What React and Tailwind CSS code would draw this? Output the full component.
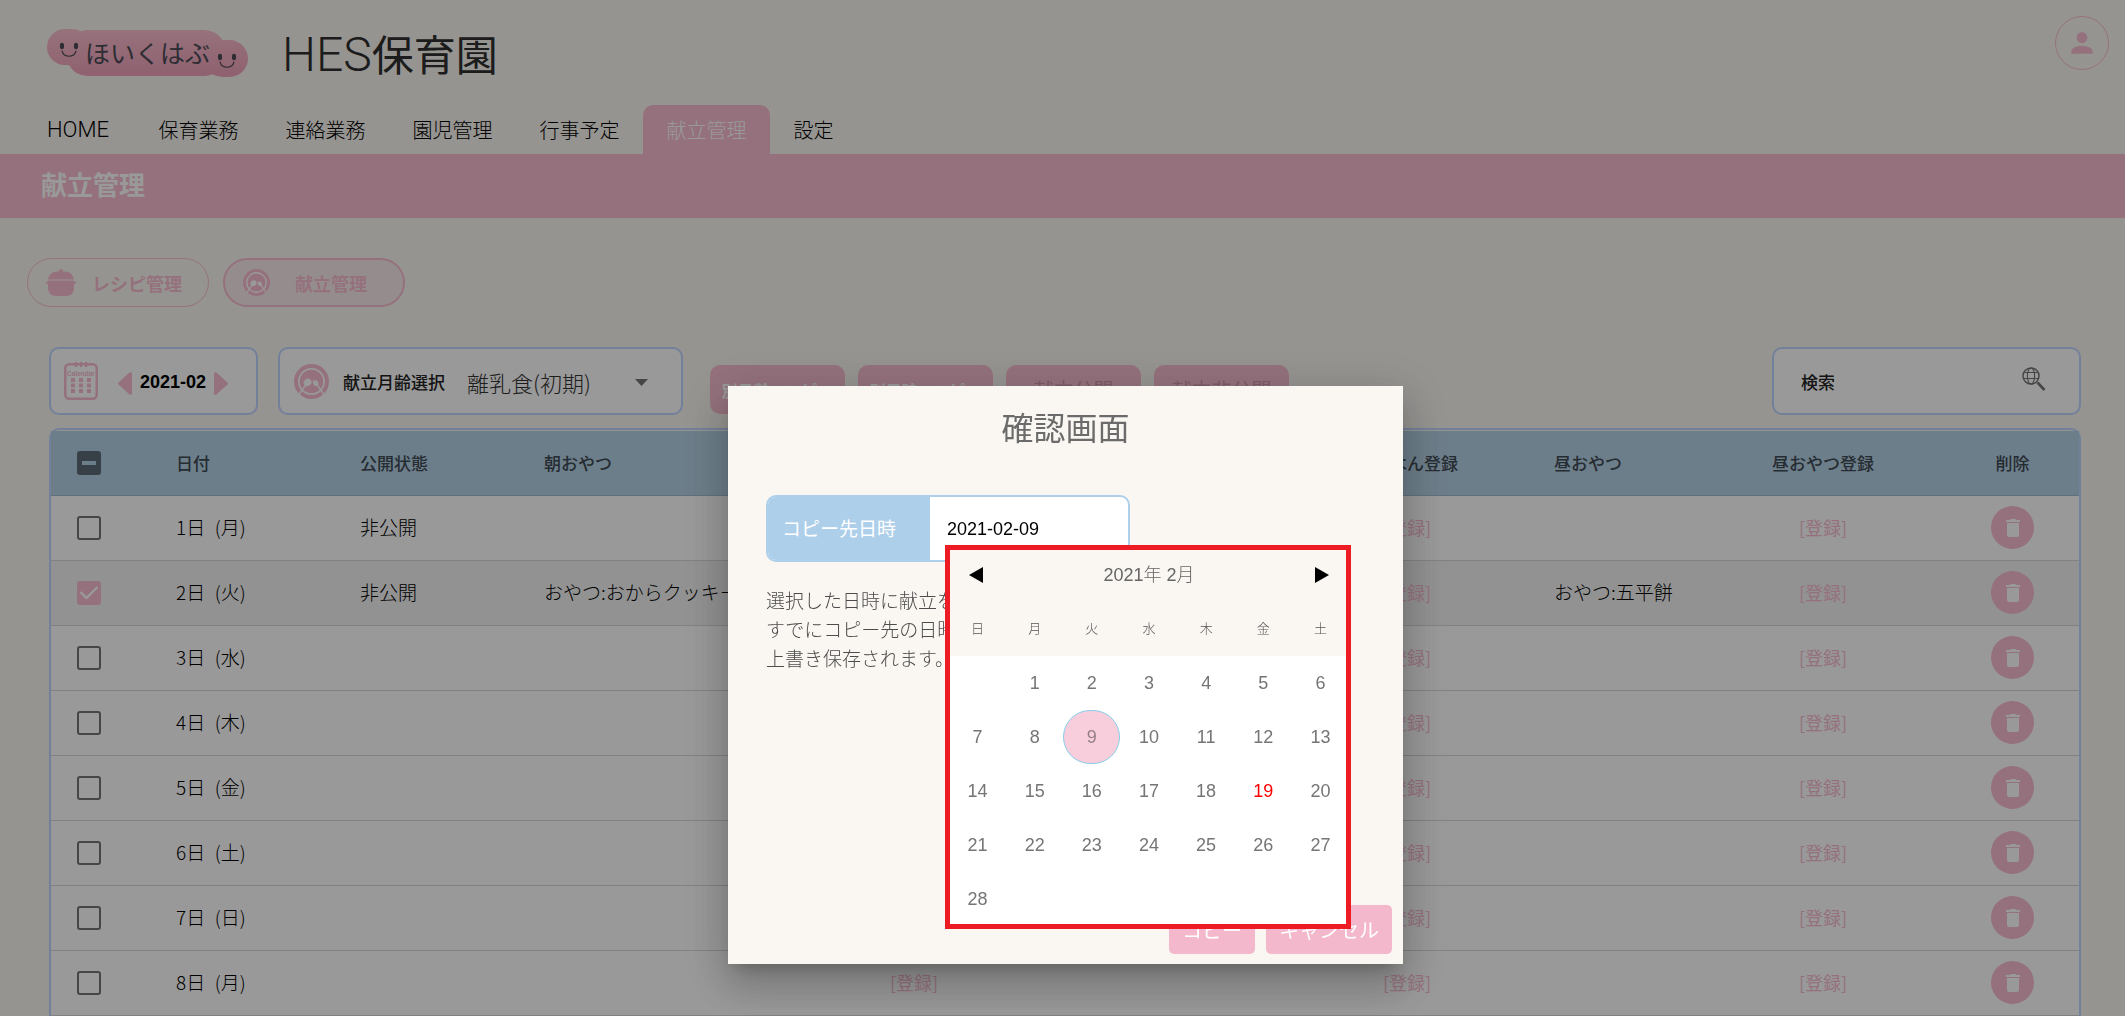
import React from "react";

const JP = "font-['Noto_Sans_CJK_JP',sans-serif]";
const ARIAL = "font-['Liberation_Sans','Noto_Sans_CJK_JP',sans-serif]";

const NAV = [
  { label: "HOME", width: "w-[114px]", size: "text-[22px] font-['Roboto',sans-serif]" },
  { label: "保育業務", width: "w-[127px]", size: "text-xl" },
  { label: "連絡業務", width: "w-[127px]", size: "text-xl" },
  { label: "園児管理", width: "w-[127px]", size: "text-xl" },
  { label: "行事予定", width: "w-[127px]", size: "text-xl" },
  { label: "献立管理", width: "w-[127px]", size: "text-xl", active: true },
  { label: "設定", width: "w-[87px]", size: "text-xl" },
];

const ROWS = [
  { day: "1日", weekday: "月", status: "非公開" },
  { day: "2日", weekday: "火", status: "非公開", checked: true, morning: "おやつ:おからクッキー", snack: "おやつ:五平餅" },
  { day: "3日", weekday: "水" },
  { day: "4日", weekday: "木" },
  { day: "5日", weekday: "金" },
  { day: "6日", weekday: "土" },
  { day: "7日", weekday: "日" },
  { day: "8日", weekday: "月" },
];

const WEEKDAYS = ["日", "月", "火", "水", "木", "金", "土"];
const DAYS = [null, ...Array.from({ length: 28 }, (_, i) => i + 1)];

function Logo() {
  return (
    <div className="relative h-[52px] w-[201px]">
      <svg viewBox="0 0 201 52" className="h-full w-full" aria-hidden="true">
        <defs>
          <linearGradient id="cloud" x1="0" y1="0" x2="0" y2="1">
            <stop offset="0" stopColor="#fbc0d0" />
            <stop offset="1" stopColor="#ef9fb8" />
          </linearGradient>
          <clipPath id="cloudShape">
            <rect x="0" y="1" width="43" height="36" rx="18" />
            <rect x="19" y="2" width="160" height="46" rx="22" />
            <rect x="157" y="12" width="44" height="37" rx="18.500" />
          </clipPath>
        </defs>
        <rect width="201" height="52" fill="url(#cloud)" clipPath="url(#cloudShape)" />
        <g fill="#4b4b55">
          <ellipse cx="15" cy="18" rx="2.100" ry="3.200" />
          <ellipse cx="29" cy="18" rx="2.100" ry="3.200" />
          <ellipse cx="173" cy="29" rx="2.100" ry="3.200" />
          <ellipse cx="187" cy="29" rx="2.100" ry="3.200" />
        </g>
        <g fill="none" stroke="#4b4b55" strokeWidth="1.100" strokeLinecap="round">
          <path d="M15 23c2 7 12 7 14 0" />
          <path d="M173 34c2 7 12 7 14 0" />
        </g>
      </svg>
      <span className="absolute inset-0 flex items-center justify-center pb-0.5 text-[25px] text-[#4b4b55]">ほいくはぶ</span>
    </div>
  );
}

function PlateIcon({ className }) {
  return (
    <svg viewBox="0 0 36 36" className={className} aria-hidden="true">
      <circle cx="18" cy="18" r="18" fill="#f7bdd0" />
      <circle cx="18" cy="18" r="13" fill="none" stroke="#fff" strokeWidth="1.800" />
      <g stroke="#fff" strokeWidth="1.600" strokeLinecap="round">
        <path d="M12.500 21 5.500 31" />
        <path d="M23.500 21l7 10" />
      </g>
      <ellipse cx="14" cy="19" rx="4.200" ry="3.600" fill="#fff" transform="rotate(-35 14 19)" />
      <path d="M19 16.500l1 4.500c1.500 2.500 5 2 5.500-1l-2.700-4-.8 2-1-2.300-.7 2z" fill="#fff" />
    </svg>
  );
}

function PotIcon() {
  return (
    <svg viewBox="0 0 30 27" className="h-[27px] w-[30px]" aria-hidden="true" fill="#f7bdd0">
      <circle cx="15" cy="2" r="2" />
      <path d="M2 10.500C3 5.500 6 2.500 11 2.500h8c5 0 8 3 9 8z" />
      <path d="M2 11.500h26V19c0 5-3 8-8 8H10c-5 0-8-3-8-8z" />
      <rect x="0" y="12.500" width="30" height="2.600" rx="1.300" />
    </svg>
  );
}

function CalendarIcon() {
  return (
    <svg viewBox="0 0 34 38" className="h-[38px] w-[34px]" aria-hidden="true">
      <rect x="1.250" y="2.250" width="31.500" height="34.500" rx="4" fill="none" stroke="#f7bdd0" strokeWidth="2.500" />
      <g fill="#f7bdd0">
        <rect x="11" y="0" width="2.200" height="5" />
        <rect x="16" y="0" width="2.200" height="5" />
        <rect x="21" y="0" width="2.200" height="5" />
        {[7, 15, 23].map((x) =>
          [16, 21.5, 27].map((y) => <rect key={x + "-" + y} x={x} y={y} width="4" height="4" />)
        )}
      </g>
      <text x="17" y="13.500" textAnchor="middle" fontSize="6.500" fontFamily="Liberation Sans" fontWeight="bold" fill="#f7bdd0">
        Calendar
      </text>
    </svg>
  );
}

function Arrow({ left }) {
  return (
    <svg viewBox="0 0 14 23" className="h-[23px] w-[14px]" aria-hidden="true" fill="#f7bdd0">
      {left ? (
        <path d="M14 2v19c0 2-1.500 2.500-3 1L.6 12.600a1.500 1.500 0 0 1 0-2.200L11 1c1.500-1.500 3-1 3 1z" />
      ) : (
        <path d="M0 2v19c0 2 1.500 2.500 3 1l10.400-9.400a1.500 1.500 0 0 0 0-2.200L3 1C1.500-.5 0 0 0 2z" />
      )}
    </svg>
  );
}

function SearchGlobeIcon() {
  return (
    <svg viewBox="0 0 24 24" className="h-6 w-6" fill="none" stroke="#757575" strokeWidth="1.100" aria-hidden="true">
      <circle cx="9" cy="9" r="8" strokeWidth="1.500" />
      <ellipse cx="9" cy="9" rx="3.600" ry="8" />
      <path d="M2.500 5.500h13M1.500 11.500h15" />
      <path d="M15.500 15.500l7 7.500" strokeWidth="2.600" />
    </svg>
  );
}

function Check({ state, label }) {
  return (
    <label className="relative mx-auto flex h-6 w-6">
      <input
        type="checkbox"
        aria-label={label}
        defaultChecked={state === "checked"}
        className={
          "h-6 w-6 appearance-none rounded-[3px] " +
          (state === "checked" ? "bg-[#f7bdd0]" : state === "mixed" ? "bg-[#5c6b76]" : "border-[2px] border-[#757575]")
        }
      />
      {state === "checked" && (
        <svg viewBox="0 0 24 24" className="pointer-events-none absolute inset-0" fill="none" stroke="#fff" strokeWidth="2.400">
          <path d="M3.500 11l6 6L20.500 6" />
        </svg>
      )}
      {state === "mixed" && <span className="absolute left-[5px] top-2.5 h-1 w-3.5 bg-[#b5d2e6]" />}
    </label>
  );
}

function RegisterLink() {
  return (
    <a href="#register" className="text-lg font-normal text-[#f7bdd0]">
      [登録]
    </a>
  );
}

function Header() {
  return (
    <header>
      <div className="flex h-[105px] items-start justify-between pl-[47px] pr-4">
        <div className="flex items-center gap-[34px] pt-[23px]">
          <Logo />
          <h1 className="flex items-baseline text-[42px] leading-[60px] text-[#2f2f2f]">
            <span className="font-['Roboto',sans-serif] text-5xl font-light leading-[60px]">HES</span>
            保育園
          </h1>
        </div>
        <button type="button" aria-label="アカウント" className="mt-4 flex h-[54px] w-[54px] items-center justify-center rounded-full border border-[#f7bdd0]">
          <svg viewBox="0 0 24 24" className="h-8 w-8" fill="#f7bdd0">
            <path d="M12 12c2.210 0 4-1.790 4-4s-1.790-4-4-4-4 1.790-4 4 1.790 4 4 4zm0 2c-2.670 0-8 1.340-8 4v2h16v-2c0-2.660-5.330-4-8-4z" />
          </svg>
        </button>
      </div>
      <nav className="flex h-[49px] pl-[21px]">
        {NAV.map((n) => (
          <a
            key={n.label}
            href="#nav"
            className={
              "flex items-center justify-center font-light " +
              n.size + " " + n.width +
              (n.active ? " rounded-t-[10px] bg-[#f7bdd0] text-white" : " text-black")
            }
          >
            {n.label}
          </a>
        ))}
      </nav>
      <div className="flex h-16 items-center bg-[#f7bdd0] pb-1 pl-[41px]">
        <h2 className="text-[26px] font-bold leading-9 text-white">献立管理</h2>
      </div>
    </header>
  );
}

function Toolbar() {
  const card = "flex h-[68px] items-center rounded-[10px] border-2 border-[#c0d6ff] bg-white ";
  const action = "h-[49px] w-[135px] rounded-[10px] bg-[#f7bdd0] ";
  return (
    <div className="flex items-start">
      <div className={card + "w-[209px] pl-[13px]"}>
        <CalendarIcon />
        <button type="button" aria-label="前月" className="ml-5 pt-1">
          <Arrow left />
        </button>
        <span className={"px-2 pt-0.5 text-lg font-bold text-black " + ARIAL}>2021-02</span>
        <button type="button" aria-label="次月" className="pt-1">
          <Arrow />
        </button>
      </div>
      <div className={card + "ml-5 w-[405px] pl-3.5"}>
        <PlateIcon className="h-[35px] w-[35px]" />
        <label htmlFor="age" className="ml-3.5 pt-0.5 text-[17px] font-medium text-[#222]">
          献立月齢選択
        </label>
        <div className="relative ml-[22px] flex-1 pt-0.5">
          <select id="age" className="w-[200px] appearance-none text-[22px] font-light text-[#333]">
            <option>離乳食(初期)</option>
          </select>
          <svg viewBox="0 0 13 7" className="pointer-events-none absolute left-[168px] top-[15px] h-[7px] w-[13px]" fill="#757575">
            <path d="M0 0h13L6.500 7z" />
          </svg>
        </div>
      </div>
      <div className="ml-[27px] mt-[18px] flex gap-[13px]">
        <button type="button" className={action + "text-base font-bold text-white"}>別月齢へコピー</button>
        <button type="button" className={action + "text-base font-bold text-white"}>別日時へコピー</button>
        <button type="button" className={action + "text-xl text-[#cf97ab]"}>献立公開</button>
        <button type="button" className={action + "text-xl text-[#cf97ab]"}>献立非公開</button>
      </div>
      <div className={card + "ml-auto w-[309px] pl-[27px] pr-[33px]"}>
        <input aria-label="検索" placeholder="検索" className="min-w-0 flex-1 pt-0.5 text-[17px] font-medium placeholder-[#222] outline-none" />
        <button type="button" aria-label="検索する" className="pb-1">
          <SearchGlobeIcon />
        </button>
      </div>
    </div>
  );
}

function MenuTable() {
  const th = "px-4 text-left font-medium ";
  const center = "px-0 text-center font-medium ";
  return (
    <div className="mt-[13px] rounded-t-[10px] border-2 border-b-0 border-[#c0d6ff] pt-px">
      <table className="w-full table-fixed whitespace-nowrap">
        <colgroup>
          <col className="w-[75px]" />
          <col className="w-[218px]" />
          <col className="w-[184px]" />
          <col className="w-[264px]" />
          <col className="w-[244px]" />
          <col className="w-[240px]" />
          <col className="w-[262px]" />
          <col className="w-[166px]" />
          <col className="w-[238px]" />
          <col className="w-[137px]" />
        </colgroup>
        <thead>
          <tr className="h-16 border-b border-[#a2bccd] bg-[#b5d2e6] text-[17px] text-[#3f4a54]">
            <th>
              <Check state="mixed" label="すべて選択" />
            </th>
            <th className="pl-[50px] text-left font-medium">日付</th>
            <th className={th}>公開状態</th>
            <th className={th}>朝おやつ</th>
            <th className={center}>朝おやつ登録</th>
            <th className={th}>昼ごはん</th>
            <th className={center}>昼ごはん登録</th>
            <th className={th}>昼おやつ</th>
            <th className={center}>昼おやつ登録</th>
            <th className="pl-1 text-center font-medium">削除</th>
          </tr>
        </thead>
        <tbody>
          {ROWS.map((r) => (
            <tr
              key={r.day}
              className={"h-[65px] border-b border-[#d8d8d8] text-[19px] font-light text-black " + (r.checked ? "bg-[#f3f3f3]" : "bg-white")}
            >
              <td>
                <Check state={r.checked ? "checked" : "off"} label={r.day} />
              </td>
              <td className="pl-[50px]">
                {r.day}&ensp;({r.weekday})
              </td>
              <td className="px-4">{r.status}</td>
              <td className="px-4">{r.morning}</td>
              <td className="text-center"><RegisterLink /></td>
              <td />
              <td className="text-center"><RegisterLink /></td>
              <td className="px-4">{r.snack}</td>
              <td className="text-center"><RegisterLink /></td>
              <td className="pl-1">
                <button type="button" aria-label="削除" className="mx-auto flex h-[43px] w-[43px] items-center justify-center rounded-full bg-[#f7bdd0]">
                  <svg viewBox="0 0 24 24" className="h-6 w-6" fill="#fff">
                    <path d="M6 19c0 1.100.9 2 2 2h8c1.100 0 2-.9 2-2V7H6v12zM19 4h-3.500l-1-1h-5l-1 1H5v2h14V4z" />
                  </svg>
                </button>
              </td>
            </tr>
          ))}
        </tbody>
      </table>
    </div>
  );
}

function DatePicker() {
  return (
    <div className={"absolute left-[179px] top-[50px] w-[406px] border-5 border-[#ed1c24] bg-white " + ARIAL}>
      <div className="bg-[#faf7f2]">
        <div className="flex h-[50px] items-center justify-between pl-[19px] pr-[17px]">
          <button type="button" aria-label="前の月">
            <svg viewBox="0 0 14 16" className="h-4 w-3.5"><path d="M14 0v16L0 8z" /></svg>
          </button>
          <span className="text-lg font-light text-[#666]">2021年 2月</span>
          <button type="button" aria-label="次の月">
            <svg viewBox="0 0 14 16" className="h-4 w-3.5"><path d="M0 0v16l14-8z" /></svg>
          </button>
        </div>
        <div className="-ml-px -mr-[3px] grid h-14 grid-cols-7 items-center pt-0.5 text-center text-[13px] font-light text-[#555]">
          {WEEKDAYS.map((w) => (
            <span key={w}>{w}</span>
          ))}
        </div>
      </div>
      <div className="-ml-px -mr-[3px] grid h-[268px] auto-rows-[54px] grid-cols-7">
        {DAYS.map((d, i) =>
          d === null ? (
            <span key={i} />
          ) : (
            <button
              key={i}
              type="button"
              className={
                "text-lg " +
                (d === 9
                  ? "rounded-[28px] border border-[#87ceeb] bg-[#f8cedc] text-[#948088]"
                  : d === 19
                    ? "text-[#ff0000]"
                    : "text-[#757575]")
              }
            >
              {d}
            </button>
          )
        )}
      </div>
    </div>
  );
}

function CopyDialog() {
  return (
    <div
      role="dialog"
      aria-label="確認画面"
      className="flex h-[578px] w-[675px] flex-col bg-[#faf7f2] px-[38px] pt-[18px] shadow-[0_11px_15px_-7px_rgba(0,0,0,0.2),0_24px_38px_3px_rgba(0,0,0,0.14),0_9px_46px_8px_rgba(0,0,0,0.12)]"
    >
      <h2 className="text-center text-[32px] leading-[44px] text-[#6b6b6b]">確認画面</h2>
      <div className="relative mt-[47px] w-[364px]">
        <div className="flex h-[67px] overflow-hidden rounded-[10px] border-2 border-[#adcfea] bg-white">
          <label htmlFor="copyDate" className="flex w-[162px] items-center bg-[#adcfea] pl-3.5 text-[19px] text-white">
            コピー先日時
          </label>
          <input id="copyDate" defaultValue="2021-02-09" className={"min-w-0 flex-1 pl-[17px] text-lg text-black outline-none " + ARIAL} />
        </div>
        <DatePicker />
      </div>
      <p className="mt-[23px] text-[19px] font-light leading-[29px] text-[#4c4c4c]">
        選択した日時に献立をコピーします。
        <br />
        すでにコピー先の日時に献立がある場合、
        <br />
        上書き保存されます。
      </p>
      <div className="-mr-[27px] mt-auto flex justify-end gap-[11px] pb-2.5">
        <button type="button" className="h-[49px] w-[86px] rounded-[5px] bg-[#f4b8cd] text-xl text-white">コピー</button>
        <button type="button" className="h-[49px] w-[126px] rounded-[5px] bg-[#f4b8cd] text-xl text-white">キャンセル</button>
      </div>
    </div>
  );
}

export default function App() {
  const pill = "flex h-[49px] w-[182px] items-center rounded-full border-[#f7bdd0] text-lg font-bold text-[#f7bdd0] ";
  return (
    <div className={"h-screen overflow-hidden bg-[#faf7f2] " + JP}>
      <Header />
      <main>
        <div className="flex gap-3.5 pl-[27px] pt-10">
          <button type="button" className={pill + "border pl-[18px] gap-4"}>
            <PotIcon />
            レシピ管理
          </button>
          <button type="button" className={pill + "border-2 bg-[#f9ecec] pl-[18px] gap-[25px]"}>
            <PlateIcon className="h-[27px] w-[27px]" />
            献立管理
          </button>
        </div>
        <div className="pl-[49px] pr-11 pt-10">
          <Toolbar />
          <MenuTable />
        </div>
      </main>
      <div className="fixed inset-0 flex items-start justify-center bg-black/40 pl-1.5 pt-[386px]">
        <CopyDialog />
      </div>
    </div>
  );
}
